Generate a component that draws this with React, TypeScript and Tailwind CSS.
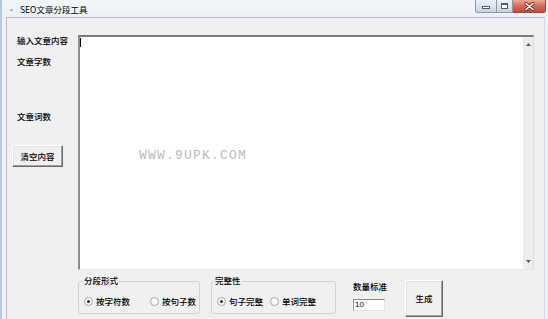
import React from "react";

function Radio({ checked, label }: { checked?: boolean; label: string }) {
  return (
    <div className="flex items-center">
      <span className="w-[9px] h-[9px] rounded-full border border-[#a8a8a8] bg-[#f6f6f6] flex items-center justify-center">
        {checked && <span className="w-[3px] h-[3px] rounded-full bg-[#2a2a2a]" />}
      </span>
      <span className="ml-[3px] text-[8.5px] leading-[9px] text-black whitespace-nowrap">{label}</span>
    </div>
  );
}

function ClassicButton({ label, className }: { label: string; className: string }) {
  return (
    <div
      className={
        "flex items-center justify-center bg-[#f0f0f0] border border-t-white border-l-white border-r-[#696969] border-b-[#696969] shadow-[inset_-1px_-1px_0_#a0a0a0,inset_1px_1px_0_#e3e3e3] text-[8.5px] leading-[9px] text-black " +
        className
      }
    >
      {label}
    </div>
  );
}

export default function App() {
  return (
    <div className="w-[548px] h-[319px] overflow-hidden flex flex-col bg-[#eef2f7] border-l-2 border-[#b6c9df] font-['Noto_Sans_CJK_SC',sans-serif] font-medium text-black text-[8.5px] leading-[9px]">
      {/* title bar */}
      <div className="h-[17px] flex items-start shrink-0 bg-gradient-to-b from-[#f3f6f9] to-[#edf1f6]">
        <div className="mt-[9px] ml-[8px] w-[3px] h-[2px] bg-[#a9bcd2]" />
        <div className="ml-[7px] mt-[5px] whitespace-nowrap font-normal">SEO文章分段工具</div>
        <div className="ml-auto mr-[2px] flex h-[13px]">
          <div className="w-[22px] h-full rounded-bl-[3px] border border-t-0 border-[#8b97a9] bg-gradient-to-b from-[#eef2f7] to-[#c8d4e3] flex items-center justify-center">
            <div className="w-[8px] h-[3px] bg-white border border-[#525c6a] mt-[3px]" />
          </div>
          <div className="w-[16px] h-full border-b border-r border-[#8b97a9] bg-gradient-to-b from-[#eef2f7] to-[#c8d4e3] flex items-center justify-center">
            <div className="w-[7px] h-[6px] bg-white border border-[#525c6a] border-t-2" />
          </div>
          <div className="w-[33px] h-full rounded-br-[3px] border-b border-r border-[#8e4a45] bg-gradient-to-b from-[#e8a899] via-[#d56a5b] to-[#c9473a] flex items-center justify-center">
            <svg width="11" height="9" viewBox="0 0 11 9">
              <path d="M2 1.5 L9 7.5 M9 1.5 L2 7.5" stroke="#5a2a28" strokeWidth="3" strokeLinecap="round" />
              <path d="M2 1.5 L9 7.5 M9 1.5 L2 7.5" stroke="#ffffff" strokeWidth="1.6" strokeLinecap="round" />
            </svg>
          </div>
        </div>
      </div>

      {/* body */}
      <div className="flex flex-1 min-h-0">
        <div className="w-[4px] shrink-0" />
        <div className="w-[538px] shrink-0 bg-[#f0f0f0] border-l border-t border-[#b5bcc5] flex flex-col">
          <div className="flex pt-[17px]">
            {/* left column */}
            <div className="w-[71px] shrink-0 flex flex-col">
              <div className="ml-[10px] mt-[1px] whitespace-nowrap">输入文章内容</div>
              <div className="ml-[10px] mt-[12px] whitespace-nowrap">文章字数</div>
              <div className="ml-[10px] mt-[46px] whitespace-nowrap">文章词数</div>
              <ClassicButton label="清空内容" className="ml-[5px] mt-[24px] w-[51px] h-[22px]" />
            </div>
            {/* textarea */}
            <div className="w-[456px] h-[235px] shrink-0 flex border-t-2 border-l-2 border-t-[#7d7d7d] border-l-[#8c8c8c] border-r border-b border-r-[#dcdcdc] border-b-[#e8e8e8]">
              <div className="flex-1 bg-white relative">
                <div className="absolute left-[0px] top-[1px] w-[1px] h-[9px] bg-black" />
                <div className="absolute left-[59px] top-[112px] font-['Liberation_Mono',monospace] font-normal text-[13px] leading-[13px] tracking-[1.2px] text-[#bcbcbc] whitespace-nowrap">
                  WWW.9UPK.COM
                </div>
              </div>
              <div className="w-[11px] bg-[#ededed] border-l border-white flex flex-col items-center justify-between py-[6px]">
                <svg width="5" height="3" viewBox="0 0 5 3">
                  <path d="M0 3 L2.5 0 L5 3 Z" fill="#5c5c5c" />
                </svg>
                <svg width="5" height="3" viewBox="0 0 5 3">
                  <path d="M0 0 L2.5 3 L5 0 Z" fill="#5c5c5c" />
                </svg>
              </div>
            </div>
          </div>

          {/* bottom row */}
          <div className="flex items-start mt-[10px] pl-[71px]">
            <div className="relative mt-[1px] w-[122px] h-[33px] shrink-0 border border-[#cdd4d9] rounded-[3px]">
              <div className="absolute -top-[6px] left-[4px] px-[1px] bg-[#f0f0f0] whitespace-nowrap">分段形式</div>
              <div className="flex pt-[15px] pl-[5px]">
                <Radio checked label="按字符数" />
                <div className="ml-[20px]">
                  <Radio label="按句子数" />
                </div>
              </div>
            </div>
            <div className="relative mt-[1px] ml-[11px] w-[125px] h-[33px] shrink-0 border border-[#cdd4d9] rounded-[3px]">
              <div className="absolute -top-[6px] left-[2px] px-[1px] bg-[#f0f0f0] whitespace-nowrap">完整性</div>
              <div className="flex pt-[15px] pl-[5px]">
                <Radio checked label="句子完整" />
                <div className="ml-[7px]">
                  <Radio label="单词完整" />
                </div>
              </div>
            </div>
            <div className="ml-[17px] mt-[2px] flex flex-col shrink-0">
              <div className="whitespace-nowrap">数量标准</div>
              <div className="mt-[8px] w-[32px] h-[12px] bg-white border-t border-l border-t-[#8a8a8a] border-l-[#9a9a9a] border-r border-b border-r-[#e3e3e3] border-b-[#e3e3e3] pl-[1px] font-['Liberation_Sans',sans-serif] font-normal text-[8px] leading-[10px]">
                10
              </div>
            </div>
            <ClassicButton label="生成" className="ml-[18px] w-[38px] h-[37px] shrink-0" />
          </div>
        </div>
        <div className="flex-1 border-l border-[#c9d8ea]" />
      </div>
    </div>
  );
}
